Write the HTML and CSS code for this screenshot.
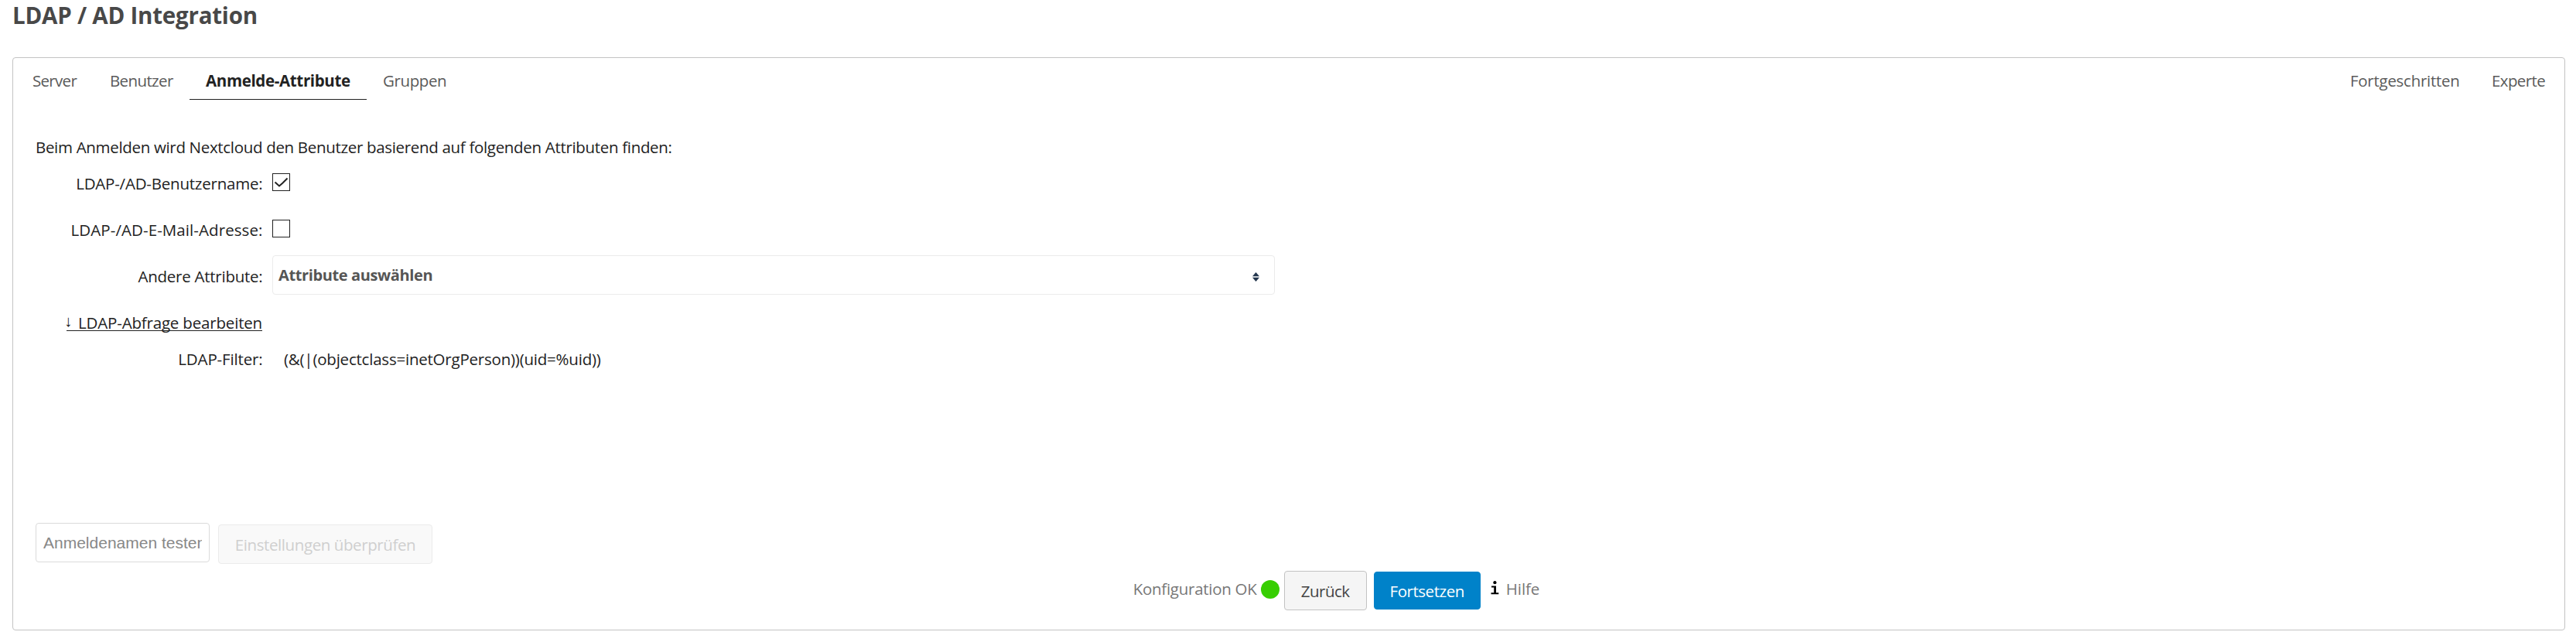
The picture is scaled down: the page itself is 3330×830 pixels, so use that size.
FILE: index.html
```
<!DOCTYPE html>
<html lang="de">
<head>
<meta charset="utf-8">
<title>LDAP / AD Integration</title>
<link rel="stylesheet" href="styles.css">
</head>
<body>
<h2 class="title">LDAP / AD Integration</h2>
<section class="panel">
  <nav class="tabs">
    <a class="tab tab-server">Server</a>
    <a class="tab tab-users">Benutzer</a>
    <a class="tab tab-login active">Anmelde-Attribute</a>
    <a class="tab tab-groups">Gruppen</a>
    <span class="spacer"></span>
    <a class="tab tab-advanced">Fortgeschritten</a>
    <a class="tab tab-expert">Experte</a>
  </nav>
  <div class="content">
    <p class="intro">Beim Anmelden wird Nextcloud den Benutzer basierend auf folgenden Attributen finden:</p>
    <div class="row">
      <label class="label l-user">LDAP-/AD-Benutzername:</label>
      <span class="checkbox"><svg width="21" height="21" viewBox="0 0 21 21"><path d="M2.500 10.500 L8 15.500 L12.500 11.500 L18.500 5.500" fill="none" stroke="#222" stroke-width="2"/></svg></span>
    </div>
    <div class="row">
      <label class="label l-mail">LDAP-/AD-E-Mail-Adresse:</label>
      <span class="checkbox"></span>
    </div>
    <div class="row">
      <label class="label l-attr">Andere Attribute:</label>
      <div class="select">
        <span class="select-text">Attribute auswählen</span>
        <svg class="sort" width="9" height="12" viewBox="0 0 9 12"><path d="M4.500 0 L9 5.300 H0 Z M4.500 12 L0 6.700 H9 Z" fill="#23364d"/></svg>
      </div>
    </div>
    <div class="row">
      <div class="label l-link"><a class="toggle"><span class="arrow">↓</span>LDAP-Abfrage bearbeiten</a></div>
    </div>
    <div class="row row-filter">
      <label class="label l-filter">LDAP-Filter:</label>
      <span class="filter">(&amp;(|(objectclass=inetOrgPerson))(uid=%uid))</span>
    </div>
  </div>
  <div class="test">
    <div class="input"><span class="placeholder">Anmeldenamen testen</span></div>
    <button class="btn btn-check" disabled>Einstellungen überprüfen</button>
  </div>
  <div class="controls">
    <span class="status">Konfiguration OK</span>
    <span class="dot"></span>
    <button class="btn btn-back">Zurück</button>
    <button class="btn btn-next">Fortsetzen</button>
    <svg class="info" width="11" height="18" viewBox="0 0 11 18"><circle cx="5.400" cy="2.200" r="2.100"/><path d="M1 6.500 H7 V15.300 H10.300 V17.300 H0.500 V15.300 H4.200 V8.500 H1 Z"/></svg>
    <a class="help">Hilfe</a>
  </div>
</section>
</body>
</html>
```
FILE: styles.css
```
* { box-sizing: border-box; }
body {
  margin: 0;
  background: #fff;
  color: #222;
  font: 20.5px/30px "Open Sans", "Noto Sans", sans-serif;
  white-space: nowrap;
}
.title {
  margin: 0 0 34px 16px;
  font-size: 29.5px;
  line-height: 40px;
  letter-spacing: -0.22px;
  color: #484848;
}
.panel {
  display: flex;
  flex-direction: column;
  width: 3300px;
  height: 741px;
  margin-left: 16px;
  border: 1px solid #c3c3c3;
  border-radius: 4px;
}
.tabs { display: flex; padding-left: 4px; }
.spacer { flex: 1; }
.tab {
  height: 54px;
  padding: 14px 0 0 21px;
  color: #5a5a5a;
}
.tab.active {
  font-weight: bold;
  color: #222;
  border-bottom: 1px solid #222;
}
.tab-server { width: 99px; letter-spacing: -0.7px; }
.tab-users { width: 125px; padding-left: 22px; letter-spacing: -0.63px; }
.tab-login { width: 229px; letter-spacing: -0.35px; }
.tab-groups { letter-spacing: -0.4px; }
.tab-advanced { width: 183px; padding-left: 22px; letter-spacing: -0.27px; }
.tab-expert { width: 116px; padding-left: 22px; letter-spacing: -0.6px; }
.content { padding: 46px 0 0 29px; }
.intro { margin: 0 0 2px; letter-spacing: -0.32px; }
.row { display: flex; align-items: center; height: 60px; gap: 11px; }
.row-filter { height: 34px; }
.label { width: 295px; padding-right: 1.500px; text-align: right; }
.l-user { letter-spacing: -0.21px; }
.l-mail { letter-spacing: 0.08px; }
.l-attr { letter-spacing: -0.25px; }
.l-link { letter-spacing: -0.18px; padding-right: 2px; }
.l-filter { letter-spacing: -0.15px; }
.checkbox {
  width: 23px;
  height: 23px;
  margin-bottom: 3px;
  border: 1px solid #222;
}
.checkbox svg { display: block; }
.select {
  display: flex;
  align-items: center;
  justify-content: space-between;
  width: 1296px;
  height: 51px;
  margin-bottom: 3px;
  padding: 0 19px 0 7px;
  border: 1px solid #ebebeb;
  border-radius: 4px;
}
.select-text {
  font-size: 20px;
  font-weight: bold;
  letter-spacing: -0.38px;
  color: #555;
}
.sort { margin-top: 4px; }
.toggle { display: inline-block; height: 26px; line-height: 30px; margin-bottom: 4px; border-bottom: 1px solid #222; }
.arrow {
  display: inline-block;
  width: 15px;
  text-align: left;
  text-indent: -3px;
  font-family: "Liberation Sans", sans-serif;
  line-height: 20px;
  vertical-align: 3px;
}
.filter { padding-left: 15px; letter-spacing: -0.22px; }
.test { display: flex; align-items: flex-start; gap: 11px; margin: 195px 0 0 29px; }
.input {
  width: 225px;
  height: 51px;
  padding: 0 9px;
  border: 1px solid #dbdbdb;
  border-radius: 4px;
}
.placeholder {
  display: block;
  overflow: hidden;
  font: 21px/49px "Liberation Sans", Arial, sans-serif;
  color: #888;
}
.btn {
  height: 51px;
  padding: 10px 0;
  border: 1px solid #c3c3c3;
  border-radius: 4px;
  background: #f5f5f5;
  color: #444;
  font: inherit;
  text-align: center;
}
.btn-check {
  width: 277px;
  margin-top: 2px;
  border-color: #ebebeb;
  background: #f9f9f9;
  color: #cfcfcf;
  letter-spacing: -0.41px;
}
.controls { display: flex; align-items: flex-start; margin: 9px 0 0 1447.700px; }
.status { width: 165px; margin-top: 8px; color: #777; letter-spacing: -0.27px; }
.dot {
  width: 24px;
  height: 24px;
  margin: 12px 6px 0 0;
  border-radius: 50%;
  background: #37ce02;
}
.btn-back { width: 107px; margin-right: 9px; letter-spacing: -0.52px; }
.btn-next {
  width: 138px;
  height: 49px;
  margin: 1px 13px 0 0;
  padding: 9px 0;
  border-color: #0082c9;
  background: #0082c9;
  color: #fff;
  letter-spacing: -0.46px;
}
.info { margin: 13px 9px 0 0; }
.help { margin-top: 8px; color: #777; letter-spacing: -0.05px; }
```
